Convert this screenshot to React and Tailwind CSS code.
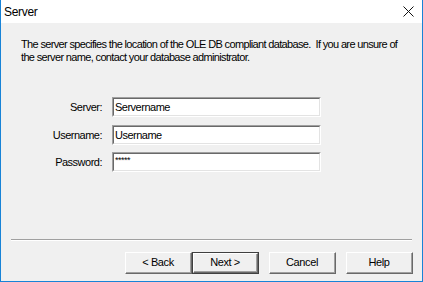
import React from "react";

const font = { fontFamily: '"Liberation Sans", Arial, sans-serif' };

const Field = ({ label, value, className = "" }) => (
  <div className={`flex items-center ${className}`}>
    <div className="w-[101px] text-right text-[11px] tracking-[-0.5px] text-black">{label}</div>
    <div className="ml-[10px] w-[209px] h-[20px] border border-t-[#a0a0a0] border-l-[#a0a0a0] border-r-white border-b-white">
      <div className="h-full w-full bg-white border border-t-[#696969] border-l-[#696969] border-r-[#e3e3e3] border-b-[#e3e3e3] pl-[1px] text-[11px] tracking-[-0.5px] leading-[16px] text-black">
        {value}
      </div>
    </div>
  </div>
);

const Button = ({ children, primary }) => (
  <div className={`w-[67px] h-[22px] ${primary ? "border border-[#404040]" : ""}`}>
    <div className="h-full w-full border border-t-white border-l-white border-r-[#696969] border-b-[#696969] bg-[#f0f0f0]">
      <div className="h-full w-full flex items-center justify-center border-r border-b border-[#a0a0a0] text-[11px] tracking-[-0.4px] text-black">
        {children}
      </div>
    </div>
  </div>
);

export default function App() {
  return (
    <div
      className="w-[423px] h-[282px] flex flex-col bg-[#f0f0f0] border-l border-r border-b border-[#1883d7] overflow-hidden"
      style={font}
    >
      <div className="h-[23px] bg-white flex items-center justify-between pl-[3px] pr-[8px]">
        <span className="text-[12px] tracking-[-0.3px] text-black">Server</span>
        <svg width="11" height="11" viewBox="0 0 11 11">
          <path d="M0.5 0.5 L10.5 10.5 M10.5 0.5 L0.5 10.5" stroke="#111" strokeWidth="1" />
        </svg>
      </div>

      <p className="mt-[15px] pl-[20px] text-[11px] tracking-[-0.65px] leading-[13px] text-black whitespace-nowrap">
        The server specifies the location of the OLE DB compliant database.&nbsp; If you are unsure of
        <br />
        the server name, contact your database administrator.
      </p>

      <div className="mt-[33px] flex flex-col">
        <Field label="Server:" value="Servername" />
        <Field label="Username:" value="Username" className="mt-[8px]" />
        <Field
          label="Password:"
          value={<span className="relative top-[-3px] text-[9px]">*****</span>}
          className="mt-[7px]"
        />
      </div>

      <div className="mt-[67px] mx-[10px] border-t border-t-[#a0a0a0] border-b border-b-white" />

      <div className="mt-[11px] flex justify-end pr-[9px]">
        <Button>&lt; Back</Button>
        <Button primary>Next &gt;</Button>
        <div className="ml-[10px]">
          <Button>Cancel</Button>
        </div>
        <div className="ml-[10px]">
          <Button>Help</Button>
        </div>
      </div>
    </div>
  );
}
